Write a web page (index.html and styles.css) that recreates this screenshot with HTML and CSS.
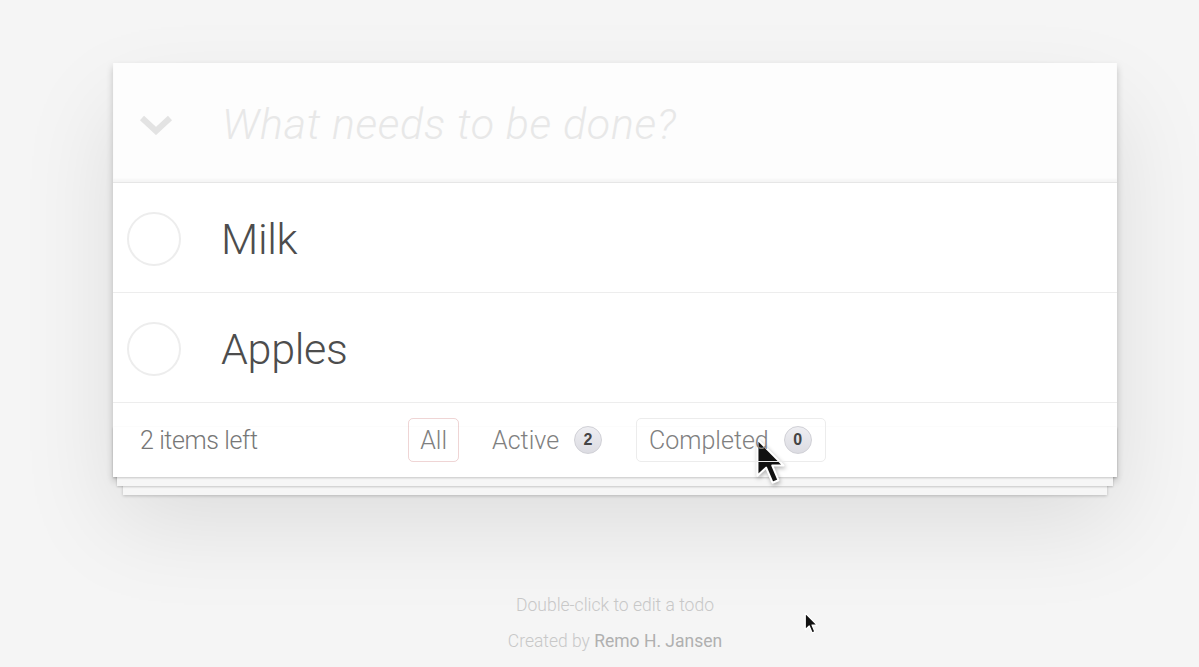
FILE: index.html
```html
<!DOCTYPE html>
<html lang="en">
<head>
    <meta charset="UTF-8">
    <title>Todos</title>
    <link rel="stylesheet" href="styles.css">
</head>
<body>
    <div class="page">
        <section class="todoapp">
            <header class="header">
                <span class="toggle-all">
                    <svg width="34" height="20" viewBox="0 0 34 20"><polyline points="3,3 17,16 31,3" fill="none" stroke="#e3e3e3" stroke-width="6"/></svg>
                </span>
                <input class="new-todo" placeholder="What needs to be done?">
            </header>
            <ul class="todo-list">
                <li class="todo"><span class="check"></span><label>Milk</label></li>
                <li class="todo"><span class="check"></span><label>Apples</label></li>
            </ul>
            <footer class="footer">
                <span class="todo-count">2 items left</span>
                <ul class="filters">
                    <li><a class="selected">All</a></li>
                    <li><a>Active <span class="badge">2</span></a></li>
                    <li><a class="hover">Completed <span class="badge">0</span></a></li>
                </ul>
                <span></span>
            </footer>
        </section>
        <footer class="info">
            <p>Double-click to edit a todo</p>
            <p>Created by <b>Remo H. Jansen</b></p>
        </footer>
    </div>

    <!-- mouse pointers from the recording -->
    <svg class="cursor cursor-big" width="30" height="48" viewBox="0 0 13 21">
        <path d="M1 1 L1 17 L4.8 13.4 L7.6 20 L10.2 18.9 L7.5 12.5 L12.4 12.5 Z" fill="#111" stroke="#fff" stroke-width="0.9" stroke-linejoin="round"/>
    </svg>
    <svg class="cursor cursor-small" width="14" height="22" viewBox="0 0 13 21">
        <path d="M1 1 L1 17 L4.8 13.4 L7.6 20 L10.2 18.9 L7.5 12.5 L12.4 12.5 Z" fill="#111" stroke="#fff" stroke-width="1.2" stroke-linejoin="round"/>
    </svg>
</body>
</html>
```

FILE: styles.css
```css
html, body {
    margin: 0;
    padding: 0;
}
body {
    font-family: Roboto, "Liberation Sans", sans-serif;
    font-weight: 300;
    background-color: #f5f5f5;
    color: #4d4d4d;
    height: 667px;
    overflow: hidden;
    position: relative;
}
.page {
    width: 1004px;
    margin-left: 113px;
    padding-top: 63px;
}
.todoapp {
    background: #fff;
    position: relative;
    box-shadow: 0 4px 7px rgba(0, 0, 0, 0.2), 0 45px 90px rgba(0, 0, 0, 0.1);
}
.header {
    display: flex;
    align-items: center;
    height: 120px;
    background: #fdfdfd;
    box-shadow: inset 0 -3px 2px rgba(0, 0, 0, 0.03);
    border-bottom: 1px solid #e6e6e6;
    box-sizing: border-box;
}
.toggle-all {
    width: 109px;
    display: flex;
    justify-content: center;
    padding-top: 4px;
}
.toggle-all svg {
    margin-left: -23px;
}
.new-todo {
    flex: 1;
    border: none;
    outline: none;
    background: transparent;
    font-family: inherit;
    font-size: 43px;
    font-weight: 300;
    font-style: italic;
    letter-spacing: 0.7px;
    color: #4d4d4d;
    padding: 0;
    margin-top: 2px;
}
.new-todo::placeholder {
    color: #e8e8e8;
}
.todo-list {
    list-style: none;
    margin: 0;
    padding: 0;
}
.todo {
    display: flex;
    align-items: center;
    height: 110px;
    border-bottom: 1px solid #ededed;
    box-sizing: border-box;
}
.check {
    width: 54px;
    height: 54px;
    border: 2px solid #ededed;
    border-radius: 50%;
    margin-left: 14px;
    margin-right: 40px;
    box-sizing: border-box;
    margin-top: 2px;
}
.todo label {
    font-size: 43px;
    color: #4d4d4d;
    line-height: 1;
    margin-top: 4px;
    letter-spacing: -0.3px;
}
.footer {
    position: relative;
    display: grid;
    grid-template-columns: 1fr auto 1fr;
    align-items: center;
    height: 74px;
    color: #777;
    font-size: 25px;
    padding: 0 27px;
}
.footer::before {
    content: '';
    position: absolute;
    left: 0;
    right: 0;
    bottom: 0;
    height: 50px;
    overflow: hidden;
    box-shadow: 0 1px 2px rgba(0, 0, 0, 0.2),
        0 13px 0 -4px #f6f6f6,
        0 14px 2px -4px rgba(0, 0, 0, 0.2),
        0 28px 0 -10px #f6f6f6,
        0 29px 3px -10px rgba(0, 0, 0, 0.2);
}
.todo-count {
    position: relative;
    z-index: 1;
    letter-spacing: -0.4px;
}
.filters {
    position: relative;
    z-index: 1;
    display: flex;
    gap: 20px;
    list-style: none;
    margin: 0 0 0 4px;
    padding: 0;
}
.filters a {
    display: flex;
    align-items: center;
    gap: 15px;
    height: 44px;
    padding: 0 13px 0 12px;
    border: 1px solid transparent;
    border-radius: 5px;
    box-sizing: border-box;
    color: #808080;
}
.filters a.selected {
    padding: 0 11px;
    border-color: rgba(175, 47, 47, 0.2);
}
.filters a.hover {
    border-color: #ececec;
}
.badge {
    display: inline-flex;
    align-items: center;
    justify-content: center;
    width: 28px;
    height: 28px;
    border-radius: 50%;
    background: linear-gradient(#eeeef2, #dcdce2);
    border: 1px solid #d0d0d6;
    box-sizing: border-box;
    font-size: 16px;
    font-weight: 700;
    color: #444;
    font-family: "Liberation Sans", sans-serif;
}
.info {
    margin-top: 119px;
    text-align: center;
    font-size: 17.5px;
    color: #c8c8c8;
}
.info p {
    margin: 0 0 17px;
    line-height: 19px;
}
.info b {
    font-weight: 400;
    color: #b0b0b0;
}
.cursor {
    position: absolute;
}
.cursor-big {
    left: 755px;
    top: 437px;
    filter: blur(0.6px) drop-shadow(1px 2px 2px rgba(0, 0, 0, 0.3));
}
.cursor-small {
    left: 804px;
    top: 612px;
}
```
